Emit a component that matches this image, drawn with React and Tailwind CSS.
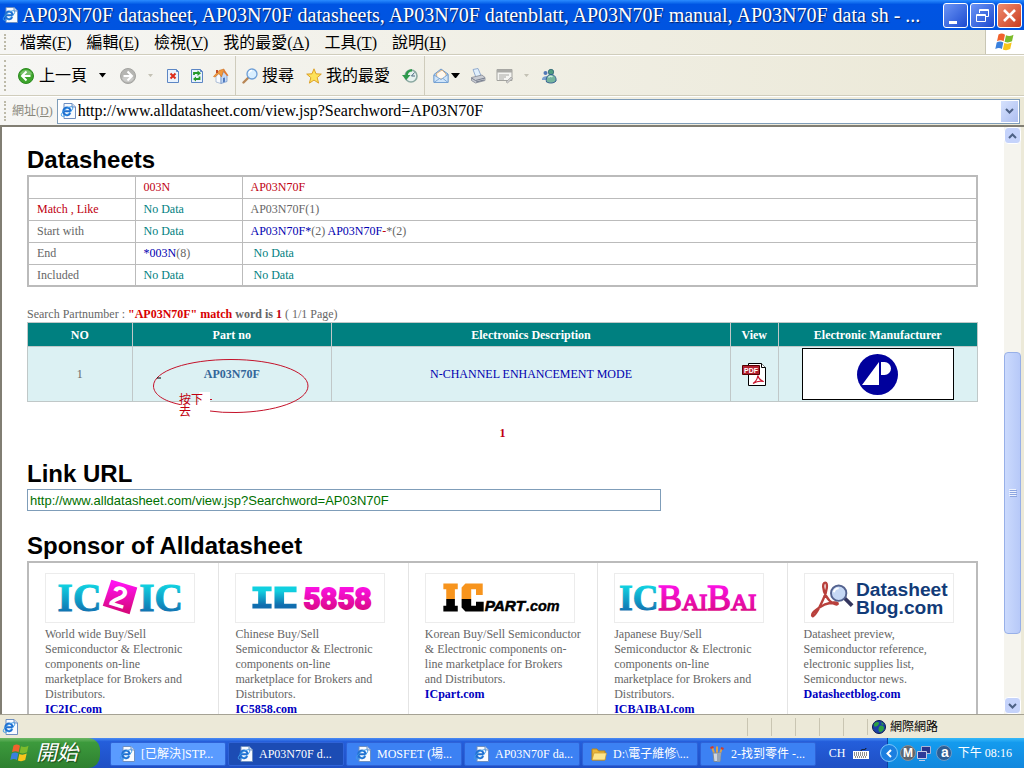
import { useState } from "react";

const URL_TEXT = "http://www.alldatasheet.com/view.jsp?Searchword=AP03N70F";

const menus = [
  { label: "檔案", key: "F" },
  { label: "編輯", key: "E" },
  { label: "檢視", key: "V" },
  { label: "我的最愛", key: "A" },
  { label: "工具", key: "T" },
  { label: "說明", key: "H" },
];

const IeIcon = ({ className = "size-4" }) => (
  <svg viewBox="0 0 16 16" className={className} aria-hidden="true">
    <path d="M4 .5h8l3.500 3.500v11.500H4z" fill="#f8fbff" stroke="#6f8fc0" />
    <path d="M12 .5v3.500h3.500" fill="#c9dcf5" stroke="#6f8fc0" />
    <path d="M10.700 8.300H3.300a3.700 3.700 0 1 1 7.400 0M3.300 8.300a3.700 3.700 0 0 0 7 1.800" fill="none" stroke="#1f6fd0" strokeWidth="2" />
    <ellipse cx="7" cy="8.500" rx="7" ry="2.600" transform="rotate(-38 7 8.500)" fill="none" stroke="#3d9be8" strokeWidth=".9" />
  </svg>
);

const Caret = ({ className = "w-[7px] text-black" }) => (
  <svg viewBox="0 0 8 5" className={className} fill="currentColor" aria-hidden="true">
    <path d="M0 0h8L4 5z" />
  </svg>
);

const WindowsFlag = ({ className }) => (
  <svg viewBox="0 0 20 18" className={className} aria-hidden="true">
    <path d="M3.500 1.500C6 0 8 .5 10 1.700L8.600 8.200C6.500 7 4.500 7 2 8.200z" fill="#f0622d" />
    <path d="M11 2.200c2.300 1.100 4.500 1 7.500-.5L17 8.300c-2.700 1.400-5 1.500-7.400.4z" fill="#7cbb2c" />
    <path d="M1.700 9.400c2.300-1.200 4.500-1.200 6.600 0L6.900 16C5 14.800 2.800 14.800.3 16z" fill="#3a80dd" />
    <path d="M9.300 9.900c2.400 1.100 4.700 1 7.400-.4L15.200 16c-2.700 1.400-5 1.500-7.300.4z" fill="#f8c51c" />
  </svg>
);

const ArrowIcon = ({ back }) => (
  <svg viewBox="0 0 16 16" className={back ? "size-4" : "size-4 rotate-180"} aria-hidden="true">
    <circle cx="8" cy="8" r="7.500" fill={back ? "#3ea52c" : "#b5b5b2"} stroke={back ? "#2a8a20" : "#a3a3a0"} />
    <path d="M2 6a6.500 6.500 0 0 1 12 0c-3 2-8 2-12 0" fill="#fff" opacity=".3" />
    <path d="M8.500 3.500 4 8l4.500 4.500M4.500 8h8" fill="none" stroke="#fff" strokeWidth="2" />
  </svg>
);

const PageIcon = ({ children }) => (
  <svg viewBox="0 0 16 16" className="size-4" aria-hidden="true">
    <path d="M2.500 1.500h9l2 2v11h-11z" fill="#eaf3fd" stroke="#5c86c4" />
    <path d="M11.500 1.500v2h2" fill="none" stroke="#5c86c4" />
    {children}
  </svg>
);

const HomeIcon = () => (
  <svg viewBox="0 0 16 16" className="size-4" aria-hidden="true">
    <path d="M3 8v6l5 1.500V8.500L5.500 4z" fill="#f7fafe" stroke="#8fa8cc" strokeWidth=".7" />
    <path d="M8 8.500v7l6-2V7l-3-4z" fill="#c5d9f5" stroke="#6b8fc6" strokeWidth=".7" />
    <path d="M.5 8.500 6 2.500l5-1.500L8.500 9 6 5.500 2 9z" fill="#f29a3c" stroke="#c96d20" strokeWidth=".6" />
    <path d="M11 1l4.500 6.500L14 8l-3.500-4z" fill="#e27a30" />
    <path d="M10 10l2-.5v4.300l-2 .6z" fill="#4f79bd" />
    <path d="M3 2h2v3H3z" fill="#c0502c" />
  </svg>
);

const SearchIcon = () => (
  <svg viewBox="0 0 16 16" className="size-4" aria-hidden="true">
    <path d="m6.500 9.500-5 5" stroke="#b88655" strokeWidth="2.400" strokeLinecap="round" />
    <circle cx="10" cy="6" r="5" fill="#d9efff" stroke="#6d9ed6" strokeWidth="1.300" />
    <path d="M7 5a3.200 3.200 0 0 1 3-2.500" fill="none" stroke="#fff" strokeWidth="1.300" />
  </svg>
);

const StarIcon = () => (
  <svg viewBox="0 0 16 16" className="size-4" aria-hidden="true">
    <path d="m8 .8 2 5 5.300.3-4.100 3.500 1.400 5.500L8 12.100l-4.600 3 1.400-5.500L.7 6.100 6 5.800z" fill="#fde25a" stroke="#d99a1c" strokeWidth=".9" />
  </svg>
);

const HistoryIcon = () => (
  <svg viewBox="0 0 16 16" className="size-4" aria-hidden="true">
    <circle cx="9" cy="8" r="6" fill="#e6f1ee" stroke="#8aa8a0" strokeWidth="1.600" />
    <path d="M12.500 4.500 9.500 8H13" fill="none" stroke="#48667f" />
    <path d="M10 2.200A5.800 5.800 0 0 0 4.500 8" fill="none" stroke="#2e9a4b" strokeWidth="2.600" />
    <path d="M0 7h8.500l-4.300 5z" fill="#2e9a4b" />
  </svg>
);

const MailIcon = () => (
  <svg viewBox="0 0 16 16" className="size-4" aria-hidden="true">
    <path d="M1 6.500 8 1l7 5v8.500H1z" fill="#aed0f1" stroke="#6c9ace" />
    <path d="M3.500 5.500 9 2l4 4v5h-9z" fill="#fff8ee" stroke="#dba568" strokeWidth=".8" />
    <path d="M1 7l7 4.500L15 6.500v8H1z" fill="#cfe5fa" stroke="#6c9ace" strokeWidth=".8" />
    <path d="m1 14.500 5.500-4M15 14.500l-5-4" stroke="#6c9ace" strokeWidth=".8" />
  </svg>
);

const PrintIcon = () => (
  <svg viewBox="0 0 16 16" className="size-4" aria-hidden="true">
    <path d="M3 1.500 8 .5l3 7-5 2z" fill="#e0effc" stroke="#7f9cc6" strokeWidth=".8" />
    <path d="M1.500 9.500 12 7l3 2.500v3L5.500 15l-4-2.500z" fill="#c9ccd3" stroke="#858a96" strokeWidth=".8" />
    <path d="m1.500 10 4 2.500L15 10M6 14l8-2" fill="none" stroke="#777e8d" />
  </svg>
);

const EditIcon = () => (
  <svg viewBox="0 0 18 16" className="w-[18px] h-4" aria-hidden="true">
    <path d="M1 1.500h15v11H1z" fill="#f5f5f2" stroke="#a3a39f" />
    <path d="M1 1.500h15v3H1z" fill="#aaaaa6" />
    <path d="M3 7h10M3 9h7M3 11h5" stroke="#a8a8a4" />
    <path d="m10 14 5-5 1.500 1.500-5 4.500z" fill="#ccc" stroke="#999" strokeWidth=".6" />
  </svg>
);

const MessengerIcon = () => (
  <svg viewBox="0 0 16 16" className="size-4" aria-hidden="true">
    <circle cx="4.500" cy="5" r="2" fill="#5277b5" />
    <path d="M1 11c0-3 6-4 6-1v2H1z" fill="#7aa0cf" />
    <circle cx="10" cy="4" r="2.700" fill="#4f9c80" stroke="#2e6476" strokeWidth=".8" />
    <path d="M5.500 14c-1-4 1-7.500 4.500-7.500s5.500 3 5 6.500c-2.500 2.500-6 2.500-9.500 1" fill="#76b59d" stroke="#345f92" />
    <path d="M7.500 9.500c1-1.500 3-1.500 4-.5" stroke="#c9eadb" fill="none" strokeWidth="1.400" />
  </svg>
);

const ToolButton = ({ label, children, className = "" }) => (
  <button type="button" aria-label={label} className={`flex items-center ${className}`}>
    {children}
  </button>
);

const Grip = () => (
  <span className="ml-1 w-0.5 self-stretch my-1 border-l-2 border-dotted border-[#bdbaa9]" />
);

const TitleBar = () => (
  <header className="flex h-[30px] shrink-0 items-center gap-1 bg-linear-to-b from-[#2a8bff] via-[#0054e3] to-[#0054e0] from-0% via-15% pl-0.5 pr-0.5">
    <IeIcon />
    <h1 className="min-w-0 flex-1 overflow-hidden whitespace-nowrap text-[20px] leading-7 text-white [text-shadow:1px_1px_1px_#0a246a]">
      AP03N70F datasheet, AP03N70F datasheets, AP03N70F datenblatt, AP03N70F manual, AP03N70F data sh - ...
    </h1>
    <div className="flex gap-0.5">
      <button type="button" aria-label="Minimize" className="size-[25px] rounded-[3px] border border-white bg-linear-to-br from-[#6c94f5] to-[#1c48cf]">
        <svg viewBox="0 0 23 23" aria-hidden="true">
          <path d="M5 17h8v3H5z" fill="#fff" />
        </svg>
      </button>
      <button type="button" aria-label="Restore" className="size-[25px] rounded-[3px] border border-white bg-linear-to-br from-[#6c94f5] to-[#1c48cf]">
        <svg viewBox="0 0 23 23" fill="none" stroke="#fff" aria-hidden="true">
          <path d="M8.500 9V5.500h9v7H15M8 6.500h10" />
          <path d="M5.500 10.500h9v7h-9zM5 11.500h10" />
        </svg>
      </button>
      <button type="button" aria-label="Close" className="size-[25px] rounded-[3px] border border-white bg-linear-to-br from-[#ef8c6e] to-[#c9391b]">
        <svg viewBox="0 0 23 23" aria-hidden="true">
          <path d="m6 6 11 11M17 6 6 17" stroke="#fff" strokeWidth="2.600" />
        </svg>
      </button>
    </div>
  </header>
);

const MenuBar = () => (
  <nav className="flex h-[25px] shrink-0 items-center border-b border-[#d0cdbc] bg-linear-to-r from-[#f6f6f4] to-[#ebe8d6]">
    <Grip />
    <div className="flex flex-1 gap-[15px] pt-0.5 pl-3.5">
      {menus.map((m) => (
        <button key={m.key} type="button" className="text-base leading-6 whitespace-nowrap">
          {m.label}(<u>{m.key}</u>)
        </button>
      ))}
    </div>
    <div className="flex w-[39px] items-center justify-center self-stretch border-l border-[#c9c6b4] bg-white">
      <WindowsFlag className="h-[18px] w-5" />
    </div>
  </nav>
);

const Toolbar = () => (
  <div className="flex h-[41px] shrink-0 items-center border-t border-b border-t-white border-b-[#d0cdbc] bg-linear-to-r from-[#f6f6f4] to-[#ebe8d6] text-base">
    <Grip />
    <ToolButton label="上一頁" className="ml-3 gap-[5px]">
      <ArrowIcon back />
      上一頁
    </ToolButton>
    <ToolButton label="上一頁選單" className="ml-3">
      <Caret />
    </ToolButton>
    <ToolButton label="下一頁" className="ml-3.5">
      <ArrowIcon />
    </ToolButton>
    <ToolButton label="下一頁選單" className="ml-3">
      <Caret className="w-[5px] text-[#c4c2b5]" />
    </ToolButton>
    <div className="ml-3 flex gap-2">
      <ToolButton label="停止">
        <PageIcon>
          <path d="m5.500 5.500 5 5M10.500 5.500l-5 5" stroke="#dd2c1a" strokeWidth="2" />
        </PageIcon>
      </ToolButton>
      <ToolButton label="重新整理">
        <PageIcon>
          <path d="M5 7V5h4.500M10.500 8.500v2.500H6" fill="none" stroke="#259a2b" strokeWidth="1.800" />
          <path d="M8.500 2.500 12 5.300 8.500 8zM7 8.500v5L4 11z" fill="#259a2b" />
        </PageIcon>
      </ToolButton>
      <ToolButton label="首頁">
        <HomeIcon />
      </ToolButton>
    </div>
    <span className="ml-1.5 w-px self-stretch bg-[#cfccbc]" />
    <ToolButton label="搜尋" className="ml-1.5 gap-1">
      <SearchIcon />
      搜尋
    </ToolButton>
    <ToolButton label="我的最愛" className="ml-3 gap-1">
      <StarIcon />
      我的最愛
    </ToolButton>
    <ToolButton label="記錄" className="ml-3">
      <HistoryIcon />
    </ToolButton>
    <span className="ml-1.5 w-px self-stretch bg-[#cfccbc]" />
    <ToolButton label="郵件" className="ml-2 gap-0.5">
      <MailIcon />
      <Caret className="w-[9px] text-black" />
    </ToolButton>
    <ToolButton label="列印" className="ml-2.5">
      <PrintIcon />
    </ToolButton>
    <ToolButton label="編輯" className="ml-2.5 gap-2.5">
      <EditIcon />
      <Caret className="w-[5px] text-[#c4c2b5]" />
    </ToolButton>
    <ToolButton label="Messenger" className="ml-3">
      <MessengerIcon />
    </ToolButton>
  </div>
);

const AddressBar = () => {
  const [url, setUrl] = useState(URL_TEXT);
  return (
    <div className="flex h-[29px] shrink-0 items-center border-t border-white bg-linear-to-r from-[#f6f6f4] to-[#ebe8d6] pr-1">
      <Grip />
      <label htmlFor="address" className="ml-1.5 mr-1 shrink-0 text-xs text-[#8a887c]">
        網址(<u>D</u>)
      </label>
      <div className="flex h-[25px] min-w-0 flex-1 items-center border border-[#7f9db9] bg-white pl-0.5 pr-px">
        <IeIcon />
        <input
          id="address"
          value={url}
          onChange={(e) => setUrl(e.target.value)}
          className="min-w-0 flex-1 pl-0.5 text-base leading-5 outline-none"
        />
        <button type="button" aria-label="網址清單" className="flex h-[21px] w-[17px] items-center justify-center bg-linear-to-br from-[#d6e2fd] to-[#aebff0]">
          <svg viewBox="0 0 9 6" className="w-[9px]" aria-hidden="true">
            <path d="m1 1 3.500 3.500L8 1" fill="none" stroke="#4d6185" strokeWidth="2" />
          </svg>
        </button>
      </div>
    </div>
  );
};

const NoData = () => <span className="text-[#008080]">No Data</span>;

const MatchTable = () => (
  <table className="w-full table-fixed border-collapse border-2 border-[#bbb] leading-5 [&_td]:h-[22px] [&_td]:border [&_td]:border-[#bbb] [&_td]:p-0 [&_td]:pl-2">
    <colgroup>
      <col className="w-[107px]" />
      <col className="w-[107px]" />
      <col />
    </colgroup>
    <tbody>
      <tr className="text-[#c00010]">
        <td></td>
        <td>003N</td>
        <td>AP03N70F</td>
      </tr>
      <tr>
        <td className="text-[#c00010]">Match , Like</td>
        <td><NoData /></td>
        <td>AP03N70F(1)</td>
      </tr>
      <tr>
        <td>Start with</td>
        <td><NoData /></td>
        <td>
          <a href="#ap03n70f" className="text-[#0000b0]">AP03N70F*</a>(2){" "}
          <a href="#ap03n70f-" className="text-[#0000b0]">AP03N70F<span className="text-[#c00010]">-</span></a>*(2)
        </td>
      </tr>
      <tr>
        <td>End</td>
        <td><a href="#003n" className="text-[#0000b0]">*003N</a>(8)</td>
        <td>&nbsp;<NoData /></td>
      </tr>
      <tr>
        <td>Included</td>
        <td><NoData /></td>
        <td>&nbsp;<NoData /></td>
      </tr>
    </tbody>
  </table>
);

const PdfIcon = () => (
  <svg viewBox="0 0 24 23" className="mx-auto h-[23px] w-6" aria-hidden="true">
    <path d="M6.500.5h13l4 4v18h-17z" fill="#fff" stroke="#000" />
    <path d="M19.500.5v4h4" fill="#fff" stroke="#000" />
    <path d="M11 20.500c3-2 4.500-4.500 4.800-8 .8 3 2.500 5 6 6-3.500-1-6.500-.6-10.800 2" fill="none" stroke="#c8152d" strokeWidth="1.200" />
    <path d="M.5 2.500h17v9H.5z" fill="#b3202f" stroke="#500" />
    <text x="2" y="10" fontSize="7" fontWeight="bold" fontFamily="Liberation Sans, sans-serif" fill="#fff">PDF</text>
  </svg>
);

const ApLogo = () => (
  <svg viewBox="0 0 41 41" className="size-[41px]" role="img" aria-label="Advanced Power">
    <circle cx="20.500" cy="20.500" r="20.500" fill="#00009c" />
    <path d="M5 31 22 8v23zM24 8h3.500a6.500 6.500 0 0 1 0 13H24z" fill="#fff" />
  </svg>
);

// hand-drawn marker around the part number
const Annotation = () => (
  <div className="pointer-events-none absolute top-9 left-[126px] h-[60px] w-[156px]">
    <svg viewBox="0 0 156 60" className="absolute inset-0" fill="none" stroke="#c4122a" aria-hidden="true">
      <path d="M46 34h11v14H27v-4h19z" fill="#fff" stroke="none" />
      <path d="M27 46.500C10 43 .5 36 .5 28 .5 13 35 1.500 78 1.500S155 13 155 28 121 54 83 54.500q-14 .3-26-1.500" />
      <path d="M4 20h4" stroke="#000" />
      <path d="M57 41.500h2" />
    </svg>
    <span className="absolute top-9 left-[26px] w-[31px] text-[12px] leading-3 text-[#c00010]">按下去</span>
  </div>
);

const PartsTable = () => (
  <div className="relative">
    <table className="w-full table-fixed border-collapse border border-[#c0c8c8] text-center">
      <colgroup>
        <col className="w-[11%]" />
        <col className="w-[21%]" />
        <col className="w-[42%]" />
        <col className="w-[5%]" />
        <col className="w-[21%]" />
      </colgroup>
      <thead>
        <tr className="h-6 bg-[#008080] text-white [&>th]:border [&>th]:border-[#c0c8c8] [&>th]:p-0">
          <th>NO</th>
          <th>Part no</th>
          <th>Electronics Description</th>
          <th>View</th>
          <th>Electronic Manufacturer</th>
        </tr>
      </thead>
      <tbody>
        <tr className="bg-[#dcf1f3] [&>td]:border [&>td]:border-[#c0c8c8] [&>td]:p-px">
          <td>1</td>
          <td>
            <a href="#part" className="font-bold text-[#336699]">AP03N70F</a>
          </td>
          <td>
            <a href="#description" className="text-[#0000b0]">N-CHANNEL ENHANCEMENT MODE</a>
          </td>
          <td>
            <a href="#pdf" aria-label="PDF"><PdfIcon /></a>
          </td>
          <td>
            <div className="mx-auto flex h-[52px] w-[152px] items-center justify-center border border-black bg-white">
              <ApLogo />
            </div>
          </td>
        </tr>
      </tbody>
    </table>
    <Annotation />
  </div>
);

const Gradients = () => (
  <defs>
    <linearGradient id="cyan" x1="0" y1="0" x2="0" y2="1">
      <stop offset=".2" stopColor="#10d0e0" />
      <stop offset=".85" stopColor="#106cae" />
    </linearGradient>
    <linearGradient id="pink" x1="0" y1="0" x2="0" y2="1">
      <stop offset=".1" stopColor="#ff12f0" />
      <stop offset=".9" stopColor="#d8087e" />
    </linearGradient>
    <linearGradient id="orange" x1="0" y1="0" x2="0" y2="1">
      <stop offset=".54" stopColor="#f7941d" />
      <stop offset=".54" stopColor="#000" />
    </linearGradient>
  </defs>
);

const serif = "Liberation Serif, serif";
const sans = "Liberation Sans, sans-serif";

const Ic2icLogo = () => (
  <>
    <Gradients />
    <text x="10" y="39" fontSize="41" fontWeight="bold" fontFamily={serif} fill="url(#cyan)" stroke="url(#cyan)">IC</text>
    <path d="m66 6 27 8-8 28-28-9z" fill="url(#pink)" />
    <text x="65" y="35" fontSize="31" fontWeight="bold" fontFamily={sans} fill="#fff" transform="rotate(17 75 25)">2</text>
    <text x="95" y="39" fontSize="41" fontWeight="bold" fontFamily={serif} fill="url(#cyan)" stroke="url(#cyan)">IC</text>
  </>
);

const Ic5858Logo = () => (
  <>
    <path d="M15 13h20v5h-6v13h6v5H15v-5h6V18h-6zM38 13h23v6H48v12h13v5H38z" fill="url(#cyan)" />
    <text x="68" y="36" fontSize="31" fontWeight="bold" fontFamily="Roboto, sans-serif" stroke="url(#pink)" strokeWidth="2" fill="url(#pink)">5858</text>
  </>
);

const IcpartLogo = () => (
  <>
    <path d="M16 10h15v6h-3v17h3v6H16v-6h3V16h-3zM39 10h18v12h-7v-6h-5v17h5v-4h8v10H39l-4-4V14z" fill="url(#orange)" />
    <text x="59" y="39" fontSize="16" fontWeight="bold" fontStyle="italic" fontFamily={sans} stroke="#000" strokeWidth=".6">PART</text>
    <text x="102" y="39" fontSize="15" fontWeight="bold" fontStyle="italic" fontFamily={sans} stroke="#000" strokeWidth=".4">.com</text>
  </>
);

const IcbaibaiLogo = () => (
  <>
    <text x="2" y="38" fontSize="37" fontWeight="bold" fontFamily={serif} fill="url(#cyan)" stroke="url(#cyan)">IC</text>
    <text x="43" y="38" fontSize="37" fontFamily={serif} fill="url(#pink)" stroke="url(#pink)" strokeWidth="1.500">
      B<tspan fontSize="25">AI</tspan>B<tspan fontSize="25">AI</tspan>
    </text>
  </>
);

const DatasheetBlogLogo = () => (
  <>
    <path d="M19 9c3 0 2 9-2 17-4 9-8 17-11 18-3-2 4-8 12-12 7-3 14-3 14-1s-8 0-12-8c-4-7-4-14-1-14" fill="none" stroke="#b8403c" strokeWidth="2.500" />
    <path d="m39 25 8 8" stroke="#34355e" strokeWidth="4" />
    <circle cx="33" cy="20" r="8" fill="#c5d8f5" stroke="#53628f" strokeWidth="2" />
    <path d="M28 19a5 5 0 0 1 5-4" fill="none" stroke="#fff" strokeWidth="2" />
    <text x="51" y="23" fontSize="20" fontWeight="bold" fontFamily={sans} fill="#123b78">Datasheet</text>
    <text x="51" y="42" fontSize="20" fontWeight="bold" fontFamily={sans} fill="#123b78">Blog.com</text>
  </>
);

const sponsors = [
  {
    name: "IC2IC.com",
    text: "World wide Buy/Sell\nSemiconductor & Electronic\ncomponents on-line\nmarketplace for Brokers and\nDistributors.",
    logo: <Ic2icLogo />,
  },
  {
    name: "IC5858.com",
    text: "Chinese Buy/Sell\nSemiconductor & Electronic\ncomponents on-line\nmarketplace for Brokers and\nDistributors.",
    logo: <Ic5858Logo />,
  },
  {
    name: "ICpart.com",
    text: "Korean Buy/Sell Semiconductor\n& Electronic components on-\nline marketplace for Brokers\nand Distributors.",
    logo: <IcpartLogo />,
  },
  {
    name: "ICBAIBAI.com",
    text: "Japanese Buy/Sell\nSemiconductor & Electronic\ncomponents on-line\nmarketplace for Brokers and\nDistributors.",
    logo: <IcbaibaiLogo />,
  },
  {
    name: "Datasheetblog.com",
    text: "Datasheet preview,\nSemiconductor reference,\nelectronic supplies list,\nSemiconductor news.",
    logo: <DatasheetBlogLogo />,
  },
];

const Sponsors = () => (
  <ul className="grid grid-cols-5 border-2 border-[#bbb] leading-[15px]">
    {sponsors.map((s) => (
      <li key={s.name} className="border-l border-[#e4e4e4] pt-2.5 pr-4 pb-4 pl-4 first:border-l-0">
        <svg viewBox="0 0 150 50" className="mb-1 h-[50px] w-[150px] border border-[#ececec]" role="img" aria-label={s.name}>
          {s.logo}
        </svg>
        <p className="whitespace-pre-line">{s.text}</p>
        <a href={`#${s.name}`} className="font-bold text-[#0000c0]">{s.name}</a>
      </li>
    ))}
  </ul>
);

const ScrollButton = ({ label, down }) => (
  <button type="button" aria-label={label} className="flex h-[17px] shrink-0 items-center justify-center rounded-sm border border-white bg-[#c5d3fb]">
    <svg viewBox="0 0 9 6" className={down ? "w-[9px]" : "w-[9px] rotate-180"} aria-hidden="true">
      <path d="m1 1 3.500 3.500L8 1" fill="none" stroke="#4d6185" strokeWidth="2" />
    </svg>
  </button>
);

const ScrollBar = () => (
  <div className="flex w-[17px] shrink-0 flex-col bg-[#f5f4ee]">
    <ScrollButton label="向上" />
    <div className="grow-[208] basis-0" />
    <div className="flex grow-[280] basis-0 items-center justify-center rounded-sm border border-[#98b0e8] bg-linear-to-r from-[#cbdafd] to-[#b7c9f8]">
      <svg viewBox="0 0 8 8" className="w-2" aria-hidden="true">
        <path d="M0 .5h7M0 2.500h7M0 4.500h7M0 6.500h7" stroke="#eef3fe" />
        <path d="M1 1.500h7M1 3.500h7M1 5.500h7M1 7.500h7" stroke="#8ca5e0" />
      </svg>
    </div>
    <div className="grow-[63] basis-0" />
    <ScrollButton label="向下" down />
  </div>
);

const StatusBar = () => (
  <div className="flex h-[22px] shrink-0 items-center bg-[#ece9d8] text-xs">
    <IeIcon className="ml-0.5 size-4" />
    <div className="flex flex-1 justify-end self-stretch py-0.5">
      {[0, 1, 2, 3, 4].map((n) => (
        <span key={n} className="w-6 border-l border-[#c9c5b2]" />
      ))}
    </div>
    <div className="flex w-[157px] items-center gap-1 border-l border-[#c9c5b2] pl-1 text-black">
      <svg viewBox="0 0 14 14" className="size-3.5" aria-hidden="true">
        <circle cx="7" cy="7" r="6.500" fill="#1c3fa6" stroke="#0c1c4c" />
        <path d="M2 4c2-3 5-2 5-1S6 6 4 6.500 2 6 2 4M8 6c2-1 4 0 4 2s-2 4-4 4-2-5 0-6M9 2l3 2-2 1z" fill="#2da044" />
      </svg>
      網際網路
    </div>
  </div>
);

const FolderIcon = () => (
  <svg viewBox="0 0 16 16" className="size-4 shrink-0" aria-hidden="true">
    <path d="M1 3h5l1.500 2H14v9H1z" fill="#e8b63c" stroke="#b98518" />
    <path d="M3 7h12.500L14 14H1z" fill="#fde68c" stroke="#c7962a" strokeWidth=".7" />
  </svg>
);

const PaintIcon = () => (
  <svg viewBox="0 0 16 16" className="size-4 shrink-0" aria-hidden="true">
    <path d="m3 1 3 9M8 .5 8 10M13 2l-3 8" stroke="#d8a24c" strokeWidth="2" />
    <path d="m1.500 2 3-1M12 2l2.500 1" stroke="#d33a2a" strokeWidth="2" />
    <path d="M4 7h8l-1 8.500H5z" fill="#cfd6de" stroke="#7d8a99" />
    <path d="M8 7h4l-1 8.500H8z" fill="#97a5b5" />
  </svg>
);

const tasks = [
  { title: "[已解決]STP...", icon: <IeIcon className="size-4 shrink-0" />, color: "bg-[#5a9bff]" },
  { title: "AP03N70F d...", icon: <IeIcon className="size-4 shrink-0" />, color: "bg-[#1c4cb4]" },
  { title: "MOSFET (場...", icon: <IeIcon className="size-4 shrink-0" />, color: "bg-[#3c81f3]" },
  { title: "AP03N70F da...", icon: <IeIcon className="size-4 shrink-0" />, color: "bg-[#3c81f3]" },
  { title: "D:\\電子維修\\...", icon: <FolderIcon />, color: "bg-[#3c81f3]" },
  { title: "2-找到零件 -...", icon: <PaintIcon />, color: "bg-[#3c81f3]" },
];

const TaskBar = () => (
  <footer className="flex h-[30px] shrink-0 items-center bg-linear-to-b from-[#4a8cf5] from-0% via-[#245edb] via-12% to-[#1f4fc4] text-xs text-white">
    <button type="button" className="flex h-full w-[100px] items-center gap-1.5 rounded-r-xl bg-linear-to-b from-[#6cb866] from-0% via-[#3c9a3c] via-15% to-[#2f8030] pl-2.5 text-[21px] italic leading-7 [text-shadow:1px_1px_1px_#1c4a1c]">
      <WindowsFlag className="h-[18px] w-5" />
      開始
    </button>
    <div className="flex min-w-0 flex-1 gap-0.5 pt-0.5 pl-2.5">
      {tasks.map((t) => (
        <button key={t.title} type="button" className={`flex h-[24px] min-w-0 max-w-[116px] flex-1 items-center gap-1.5 rounded-xs border border-[#2f63d8] pl-2 whitespace-nowrap ${t.color}`}>
          {t.icon}
          {t.title}
        </button>
      ))}
    </div>
    <div className="flex w-[70px] items-center gap-2 pl-3">
      CH
      <svg viewBox="0 0 16 12" className="w-4" aria-hidden="true">
        <path d="M0 4h16v8H0z" fill="#fff" />
        <path d="M1 6h14M1 8h14M2 10h12" stroke="#222" strokeDasharray="1 1" />
        <path d="M8 4c0-3 5 0 5-3" stroke="#111" fill="none" />
      </svg>
    </div>
    <div className="flex h-full items-center border-l border-[#0c3fa0] bg-linear-to-b from-[#35b8f8] from-0% via-[#149bee] via-15% to-[#1287dd] pr-3">
      <button type="button" aria-label="顯示隱藏的圖示" className="mr-0.5 -ml-2 flex size-[18px] items-center justify-center rounded-full border border-[#7cc6f8] bg-[#1b7fe0]">
        <svg viewBox="0 0 6 9" className="h-[9px]" aria-hidden="true">
          <path d="M5 1 1.500 4.500 5 8" fill="none" stroke="#fff" strokeWidth="2" />
        </svg>
      </button>
      <svg viewBox="0 0 16 16" className="size-4" aria-hidden="true">
        <circle cx="8" cy="8" r="7.500" fill="#5d6670" stroke="#8a929a" />
        <text x="3" y="12" fontSize="12" fontWeight="bold" fontFamily={sans} fill="#fff">M</text>
      </svg>
      <svg viewBox="0 0 16 16" className="size-4" aria-hidden="true">
        <path d="M5.500 1.500h9v7h-9z" fill="#27358c" stroke="#aab4d8" />
        <path d="M1.500 6.500h9v7h-9z" fill="#2e3a98" stroke="#c6cce6" />
        <path d="M3 15.500h6" stroke="#c6cce6" />
      </svg>
      <svg viewBox="0 0 16 16" className="ml-1 size-4" aria-hidden="true">
        <circle cx="8" cy="8" r="7.500" fill="#2c5d94" stroke="#6d9bc8" />
        <text x="5" y="12" fontSize="14" fontWeight="bold" fontFamily={sans} fill="#fff">a</text>
      </svg>
      <span className="ml-1.5 whitespace-nowrap">下午 08:16</span>
    </div>
  </footer>
);

export default function App() {
  const [link, setLink] = useState(URL_TEXT);

  return (
    <div className="flex h-screen flex-col overflow-hidden bg-[#ece9d8] font-['Liberation_Serif','Noto_Sans_CJK_TC',serif] text-black">
      <TitleBar />
      <MenuBar />
      <Toolbar />
      <AddressBar />
      <div className="flex min-h-0 flex-1 border-t-2 border-l-2 border-[#817e73] bg-white">
        <main className="min-w-0 flex-1 overflow-hidden pt-[18px] pr-[26px] pl-[25px] text-xs text-[#666]">
          <h2 className="font-['Liberation_Sans',sans-serif] text-2xl leading-[30px] font-bold text-black">Datasheets</h2>
          <MatchTable />
          <p className="mt-5 leading-[15px]">
            Search Partnumber :{" "}
            <b>
              <span className="text-[#d80000]">"AP03N70F" match</span> word is <span className="text-[#c00010]">1</span>
            </b>{" "}
            ( 1/1 Page)
          </p>
          <PartsTable />
          <p className="mt-6 text-center leading-[15px] font-bold text-[#c00010]">1</p>
          <h2 className="mt-[18px] font-['Liberation_Sans',sans-serif] text-2xl leading-[30px] font-bold text-black">
            <label htmlFor="link-url">Link URL</label>
          </h2>
          <input
            id="link-url"
            value={link}
            onChange={(e) => setLink(e.target.value)}
            className="block h-[22px] w-2/3 border border-[#7f9db9] px-0.5 font-['Liberation_Sans',sans-serif] text-[13px] text-[#007000] outline-none"
          />
          <h2 className="mt-5 font-['Liberation_Sans',sans-serif] text-2xl leading-[30px] font-bold text-black">Sponsor of Alldatasheet</h2>
          <Sponsors />
        </main>
        <ScrollBar />
        <div className="w-[3px] bg-[#ece9d8]" />
      </div>
      <div className="h-0.5 shrink-0 border-t border-[#a5a294]" />
      <StatusBar />
      <TaskBar />
    </div>
  );
}
